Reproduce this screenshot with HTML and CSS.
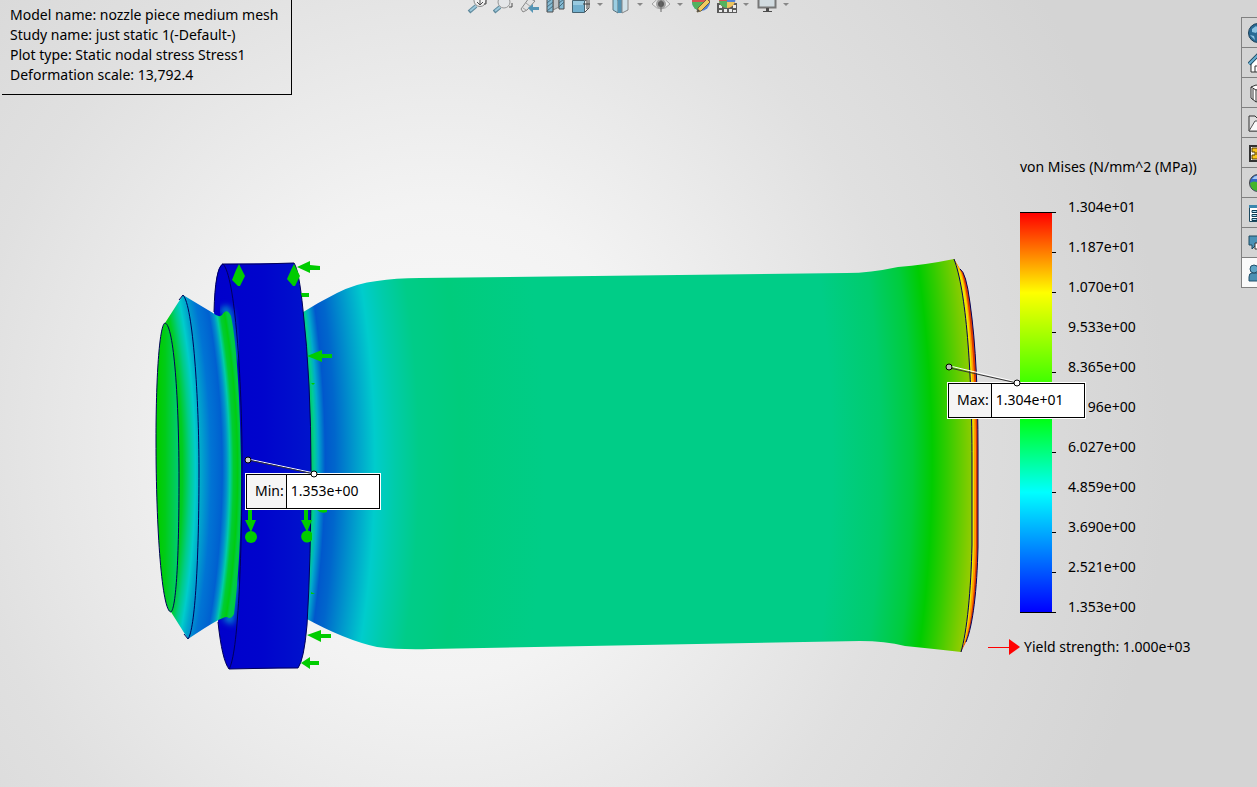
FILE: index.html
```
<!DOCTYPE html>
<html lang="en">
<head>
    <meta charset="utf-8">
    <meta name="viewport" content="width=device-width, initial-scale=1.0">
    <title>Static nodal stress</title>
    <link rel="stylesheet" href="styles.css">
</head>
<body>
    <div class="viewport">
        <header class="top">
            <div class="plot-info">
                <p>Model name: nozzle piece medium mesh</p>
                <p>Study name: just static 1(-Default-)</p>
                <p>Plot type: Static nodal stress Stress1</p>
                <p>Deformation scale: 13,792.4</p>
            </div>

            <div class="toolbar">
                <button class="tool" aria-label="Zoom to fit">
                    <svg viewBox="0 0 20 20"><path d="M2 18l7-6" stroke="#47798f" stroke-width="4"/><path d="M3 17l6-5" stroke="#8fc3da" stroke-width="2"/><circle cx="13" cy="6.500" r="6" fill="#f2f2f2" stroke="#777"/><path d="M13 3v7M10 8l3 3 3-3M19 4v6h-2" fill="none" stroke="#333"/></svg>
                </button>
                <button class="tool" aria-label="Zoom to area">
                    <svg viewBox="0 0 20 20"><path d="M1 18l6-5" stroke="#47798f" stroke-width="4"/><path d="M2 17l5-4" stroke="#8fc3da" stroke-width="2"/><circle cx="11" cy="8" r="6" fill="#e4e7e9" stroke="#888"/><path d="M19 3v3M19 9v4h-3" fill="none" stroke="#333"/></svg>
                </button>
                <button class="tool" aria-label="Previous view">
                    <svg viewBox="0 0 20 20"><path d="M2 15l8-11 6 3-8 9-4 2z" fill="#e2e2e2" stroke="#777"/><path d="M4 14l3 2M7 9l5 4" stroke="#999"/><path d="M9 14l5-4v3h6v3h-6v3z" fill="#3c88ad"/></svg>
                </button>
                <button class="tool" aria-label="Section view">
                    <svg viewBox="0 0 20 20"><path d="M8 4h6v9l-6 3z" fill="#b9bdc0" stroke="#777"/><path d="M2 4h6v14H2zM14 4h5v11h-5z" fill="#74b4d2" stroke="#333"/><path d="M2 9l6-5M2 13l6-5M2 17l6-5M14 9l5-4M14 13l5-5" stroke="#2c566b"/></svg>
                </button>
                <div class="tool-group">
                    <button class="tool" aria-label="View orientation">
                        <svg viewBox="0 0 20 20"><path d="M14 7l4-3v10l-4 4" fill="#f4f4f4" stroke="#333"/><path d="M1.500 6.500h12v12h-12z" fill="#5fa8cb" stroke="#2a4d5e"/><path d="M2 7h11v4H2z" fill="#8cc6e0"/><path d="M12 10h7M16 6v9" stroke="#222"/></svg>
                    </button>
                    <button class="drop" aria-label="Orientation list"></button>
                </div>
                <div class="tool-group">
                    <button class="tool" aria-label="Display style">
                        <svg viewBox="0 0 20 20"><path d="M2 4l5 2v13l-5-3z" fill="#8fcbe3" stroke="#45606c"/><path d="M7 6h4v13H7z" fill="#3c86aa"/><path d="M11 5l6-2v13l-6 3z" fill="#cfe3ec" stroke="#777"/></svg>
                    </button>
                    <button class="drop" aria-label="Display style list"></button>
                </div>
                <div class="tool-group">
                    <button class="tool" aria-label="Hide and show items">
                        <svg viewBox="0 0 20 20"><path d="M1 10q9-11 18 0-9 10-18 0z" fill="#eee" stroke="#999"/><circle cx="10" cy="10" r="5" fill="#999"/><circle cx="10" cy="10" r="3" fill="#444"/><path d="M10 3v15" stroke="#555"/></svg>
                    </button>
                    <button class="drop" aria-label="Hide and show list"></button>
                </div>
                <button class="tool" aria-label="Edit appearance">
                    <svg viewBox="0 0 20 20"><circle cx="10" cy="8" r="9" fill="#3b74d6"/><path d="M10 8V-1a9 9 0 0 1 9 9z" fill="#d83a3a"/><path d="M1 8a9 9 0 0 0 9 9l3-9z" fill="#3cab48"/><path d="M1 8V2h9v6z" fill="#d83a3a"/><path d="M6 18l1-4 9-9 3 3-9 9z" fill="#f5c84a" stroke="#5d4a22"/><path d="M6 18l1-3 2 2z" fill="#333"/></svg>
                </button>
                <div class="tool-group">
                    <button class="tool" aria-label="Apply scene">
                        <svg viewBox="0 0 20 20"><path d="M0 9h20v10H0z" fill="#444"/><path d="M2 11h3v3H2zM2 16h3v2H2zM7 15h3v3H7zM12 15h3v3h-3zM16 11h3v3h-3zM16 16h3v2h-3z" fill="#eee"/><circle cx="10" cy="6" r="8" fill="#d83a3a"/><path d="M2 7a8 8 0 0 0 8 7V7z" fill="#3cab48"/><path d="M10 14a8 8 0 0 0 8-7h-8z" fill="#eec14a"/><path d="M10 2h7q2 3 1 6h-8z" fill="#3b74d6"/></svg>
                    </button>
                    <button class="drop" aria-label="Scene list"></button>
                </div>
                <div class="tool-group">
                    <button class="tool" aria-label="View settings">
                        <svg viewBox="0 0 20 20"><path d="M1.500 1.500h17v12h-17z" fill="#cfdbe1" stroke="#666" stroke-width="2"/><path d="M9 14h3v3H9zM6 17h9v1H6z" fill="#333"/></svg>
                    </button>
                    <button class="drop" aria-label="View settings list"></button>
                </div>
            </div>
        </header>

        <main class="model">
            <svg class="model-plot" viewBox="0 95 988 692" role="img" aria-label="Stress contours on the nozzle">
                <defs>
                    <radialGradient id="barrel" gradientUnits="userSpaceOnUse" cx="-3000" cy="0" fx="-3000" fy="0" fr="3300" r="4000" gradientTransform="translate(0 462) scale(1 .587)">
                        <stop offset="0.015" stop-color="#00cc55"/>
                        <stop offset="0.021" stop-color="#00cc99"/>
                        <stop offset="0.026" stop-color="#00aacc"/>
                        <stop offset="0.036" stop-color="#0058cc"/>
                        <stop offset="0.05" stop-color="#0066cc"/>
                        <stop offset="0.078" stop-color="#0099cc"/>
                        <stop offset="0.107" stop-color="#00cccc"/>
                        <stop offset="0.135" stop-color="#00ccaa"/>
                        <stop offset="0.17" stop-color="#00cc88"/>
                        <stop offset="0.23" stop-color="#00cc7c"/>
                        <stop offset="0.35" stop-color="#00cd87"/>
                        <stop offset="0.76" stop-color="#00cd87"/>
                        <stop offset="0.83" stop-color="#00cc6c"/>
                        <stop offset="0.875" stop-color="#00cc3c"/>
                        <stop offset="0.903" stop-color="#00cc00"/>
                        <stop offset="0.925" stop-color="#33cc00"/>
                        <stop offset="0.965" stop-color="#99cc00"/>
                    </radialGradient>
                    <radialGradient id="neck" gradientUnits="userSpaceOnUse" cx="-800" cy="0" fx="-800" fy="0" fr="956" r="1042" gradientTransform="translate(0 470) scale(1 .95)">
                        <stop offset="0.24" stop-color="#00cc00"/>
                        <stop offset="0.31" stop-color="#00cc22"/>
                        <stop offset="0.39" stop-color="#00cc88"/>
                        <stop offset="0.46" stop-color="#00cccc"/>
                        <stop offset="0.52" stop-color="#00a8cc"/>
                        <stop offset="0.64" stop-color="#0074d4"/>
                        <stop offset="0.77" stop-color="#0060d0"/>
                        <stop offset="0.82" stop-color="#0090cc"/>
                        <stop offset="0.86" stop-color="#00ccaa"/>
                        <stop offset="0.9" stop-color="#00cc33"/>
                        <stop offset="0.95" stop-color="#00cc11"/>
                        <stop offset="0.98" stop-color="#00cc44"/>
                    </radialGradient>
                    <linearGradient id="inlet">
                        <stop offset="0.1" stop-color="#00cc00"/>
                        <stop offset="0.4" stop-color="#00cc18"/>
                        <stop offset="1" stop-color="#00cc77"/>
                    </linearGradient>
                    <linearGradient id="flange">
                        <stop offset="0" stop-color="#0000cc"/>
                        <stop offset="0.5" stop-color="#0004cc"/>
                        <stop offset="1" stop-color="#0014cc"/>
                    </linearGradient>
                    <filter id="glow"><feGaussianBlur stdDeviation="3"/></filter>
                </defs>

                <!-- outlet rim, hot side outwards -->
                <path fill="#dd3c00" d="M954 259L960 269Q966 272 970 303C976 345 978 395 978 450V547C977 590 973 625 966 642L961 652z"/>
                <path fill="#ff9a00" d="M954 259L960 269Q964 275 968 305C973 345 976 395 976 450V547C975 590 971 625 966 640L961 652z"/>
                <path fill="#eee600" d="M954 259L960 271Q963 278 967 305C971 345 974 395 974 450V547C973 590 969 625 965 640L961 652z"/>
                <path class="edge" d="M960 269Q966 272 970 303C976 345 978 395 978 450V547C977 590 973 625 966 642"/>

                <!-- barrel -->
                <path fill="url(#barrel)" d="M300 314Q317 303 337 293T377 281Q395 278 420 278L847 273Q870 273 898 267Q925 265 954 259C966 290 972 370 972 460V545C971 590 967 632 961 652Q935 649 905 646Q885 641 860 641L430 649Q400 650 377 647Q345 640 305 618z"/>
                <path class="edge" d="M954 259C966 290 972 370 972 460V545C971 590 967 632 961 652"/>

                <!-- flange -->
                <path fill="url(#flange)" d="M222 264L294 263Q299 270 303 310Q311 380 311 470Q311 560 307 625Q304 660 298 668L229 669Q222 660 218 622L226 470L214 312Q215 268 222 264z"/>
                <path class="edge" d="M222 264H260L294 263Q299 270 303 310Q311 380 311 470Q311 560 307 625Q304 660 298 668H278L229 669"/>
                <path fill="none" stroke="#009acc" stroke-width="5" filter="url(#glow)" d="M222 314Q226 302 230 315L236 360M224 617L231 621L237 580"/>

                <!-- neck and lip -->
                <path fill="url(#neck)" d="M165 323L183 295L213 313Q219 318 222 315Q227 307 231 316C237 345 240 400 241 460Q242 550 234 614Q231 620 227 617Q222 616 188 639L171 612z"/>
                <path class="edge" d="M214 312Q215 268 223 264C235 275 242 380 242 460C242 560 238 655 229 669Q222 660 218 622"/>
                <path class="edge" d="M179 300L183 295C193 305 199 400 199 470C199 560 195 630 188 639L184 634"/>

                <!-- inlet face -->
                <path class="edge-filled" fill="url(#inlet)" d="M165 323C160 324 156 370 156 440C156 530 162 612 171 612C176 608 179 560 179 480C179 400 174 325 165 323z"/>

                <!-- fixtures -->
                <g fill="#00cc00">
                    <path d="M239 264L245 276L240 286H238L232 280L236 270z"/>
                    <path d="M294 264L300 276L295 286H293L287 279L291 270z"/>
                    <path d="M297 267L310 261V265L320 266V270H310V273z"/>
                    <path d="M301 293h8v4h-7z"/>
                    <path d="M307 356L322 350V354H332V358H322V362z"/>
                    <path d="M307 635L321 630V634H331V638H321V642z"/>
                    <path d="M301 663L310 657V661H319V665H310V669z"/>
                    <path d="M314 508h13v4q-6 2-10-2z"/>
                    <path d="M311 383h4l-2 2zM311 592l4 2h-4z"/>
                    <path d="M248 508h4v12h4l-5 12l-6-12h3z"/>
                    <path d="M304 508h4v12h4l-5 12l-6-12h3z"/>
                    <circle cx="251" cy="537" r="6"/>
                    <path d="M312 533a6 6 0 1 0 0 7z"/>
                </g>
            </svg>

            <div class="callout callout-min">
                <span class="callout-name">Min:</span>
                <span class="callout-value">1.353e+00</span>
            </div>
            <div class="callout callout-max">
                <span class="callout-name">Max:</span>
                <span class="callout-value">1.304e+01</span>
            </div>

            <svg class="leaders" viewBox="0 95 988 692" aria-hidden="true">
                <path stroke="#fff" d="M248 459L314 473M950 366L1017 382"/>
                <path stroke="#333" d="M248 460L314 474M950 368L1017 383"/>
                <g stroke="#000">
                    <circle cx="248" cy="460" r="3" fill="#ccc"/>
                    <circle cx="314" cy="474" r="3" fill="#fff"/>
                    <circle cx="949" cy="367" r="3" fill="#bbb"/>
                    <circle cx="1017" cy="383" r="3" fill="#fff"/>
                </g>
            </svg>
        </main>

        <section class="legend">
            <h1>von Mises (N/mm^2 (MPa))</h1>
            <div class="scale">
                <div class="color-bar"></div>
                <div class="ticks"></div>
                <ul>
                    <li>1.304e+01</li>
                    <li>1.187e+01</li>
                    <li>1.070e+01</li>
                    <li>9.533e+00</li>
                    <li>8.365e+00</li>
                    <li>7.196e+00</li>
                    <li>6.027e+00</li>
                    <li>4.859e+00</li>
                    <li>3.690e+00</li>
                    <li>2.521e+00</li>
                    <li>1.353e+00</li>
                </ul>
            </div>
            <p class="yield">
                <svg viewBox="0 0 32 16"><path d="M0 8.500h22" stroke="#f00"/><path d="M21 0l11 8-11 8z" fill="#f00"/></svg>
                Yield strength: 1.000e+03
            </p>
        </section>

        <nav class="task-pane" aria-label="Task pane">
            <button aria-label="Resources">
                <svg viewBox="0 0 20 20"><circle cx="10" cy="10" r="9.500" fill="#2a6a94" stroke="#1d3f57"/><path d="M4 6l4-3 3 3-3 4-4-1zM2 12l4 1 1 4z" fill="#8cc3e2"/></svg>
            </button>
            <button aria-label="Home">
                <svg viewBox="0 0 20 20"><path d="M3 10v9h14v-9l-7-7z" fill="#fff" stroke="#333"/><path d="M7 19v-6h5v6" fill="none" stroke="#333"/><path d="M1 11l9-9 9 9" fill="none" stroke="#1f4960" stroke-width="4"/><path d="M1 11l9-9 9 9" fill="none" stroke="#69aed0" stroke-width="2"/></svg>
            </button>
            <button aria-label="Design library">
                <svg viewBox="0 0 20 20"><path d="M3 4l5-2 8 2v12l-8 3-5-4z" fill="#fff" stroke="#333"/><path d="M3 4l5 3 8-3M8 7v12M5 6v11" fill="none" stroke="#333"/></svg>
            </button>
            <button aria-label="File explorer">
                <svg viewBox="0 0 20 20"><path d="M1 18V3h6l2 2h8v13z" fill="#ddd" stroke="#333"/><path d="M1 18L7 8h13l-5 10z" fill="#fafafa" stroke="#555"/></svg>
            </button>
            <button aria-label="View palette">
                <svg viewBox="0 0 20 20"><path d="M2 3h17v15H2z" fill="#fff" stroke="#333" stroke-width="2"/><path d="M4 5h12v4H9v3h8v4H4v-4h3V9H4z" fill="#f8c51c" stroke="#553c00"/></svg>
            </button>
            <button aria-label="Appearances">
                <svg viewBox="0 0 20 20"><circle cx="10" cy="10" r="8.500" fill="#3268c8" stroke="#444"/><path d="M2 10q4-3 8 0v8a8 8 0 0 1-8-8z" fill="#42b52c"/><path d="M4 6q3-4 6-3v3z" fill="#a3caf4"/></svg>
            </button>
            <button aria-label="Custom properties">
                <svg viewBox="0 0 20 20"><path d="M1.500 2.500h17v16h-17z" fill="#fff" stroke="#1e4a60"/><path d="M1 2h18v3H1z" fill="#3d87ad"/><path d="M4 7.500h5v2H4zM4 11.500h5v2H4zM4 15.500h5v2H4z" fill="#aee0f5" stroke="#123d52"/></svg>
            </button>
            <button aria-label="Forum">
                <svg viewBox="0 0 20 20"><path d="M1 3h14v9H8l-4 4v-4H1z" fill="#4c92b6" stroke="#1e4a60"/><path d="M7 10h12v6h-2v3l-3-3H7z" fill="#fff" stroke="#333"/></svg>
            </button>
            <button class="active" aria-label="Collaboration">
                <svg viewBox="0 0 20 20"><path d="M1 18v-4q0-4 3-4h5q3 0 3 4v4z" fill="#4b90b3" stroke="#24506a"/><circle cx="6" cy="6" r="4" fill="#5fa5c6" stroke="#24506a"/><circle cx="14" cy="9" r="3" fill="#fff" stroke="#333"/></svg>
            </button>
        </nav>
    </div>
</body>
</html>
```

FILE: styles.css
```
* {
    box-sizing: border-box;
}
body {
    margin: 0;
    font-family: "Noto Sans", "Open Sans", sans-serif;
    font-size: 14px;
    line-height: 20px;
    color: #000;
}
p, h1, ul {
    margin: 0;
    padding: 0;
    font-size: 14px;
    font-weight: normal;
    list-style: none;
}
button {
    padding: 0;
    border: none;
    background: none;
    cursor: pointer;
}
svg {
    display: block;
}
.viewport {
    display: grid;
    grid-template-columns: 1fr 253px 16px;
    grid-template-rows: auto 1fr;
    min-height: 100vh;
    overflow: hidden;
    background: radial-gradient(ellipse 58% 100% at 35% 56%, #fafafa 0%, #f3f3f3 30%, #e0e0e0 65%, #d4d4d4 100%);
}

/* header: plot details on the left, view tools in the middle */
.top {
    grid-area: 1 / 1 / 2 / 4;
    display: grid;
    grid-template-columns: 1fr auto 1fr;
    align-items: start;
}
.plot-info {
    justify-self: start;
    margin-left: 2px;
    padding: 5px 13px 9px 8px;
    border-right: 1px solid #000;
    border-bottom: 1px solid #000;
}
.toolbar {
    display: flex;
    gap: 6px;
    margin-top: -6px;
}
.tool-group {
    display: flex;
    align-items: center;
    gap: 4px;
}
.tool {
    width: 20px;
    height: 20px;
    opacity: 0.85;
}
.drop {
    width: 10px;
    height: 20px;
}
.drop::before {
    content: "";
    display: block;
    margin: 0 auto;
    width: 0;
    border: 3px solid transparent;
    border-top-color: #888;
    border-bottom: none;
}

/* model and probes */
.model {
    grid-area: 2 / 1;
    position: relative;
    z-index: 1;
}
.model-plot {
    width: 100%;
}
.edge, .edge-filled {
    stroke: #00005a;
    stroke-width: 1;
}
.edge {
    fill: none;
}
.leaders {
    position: absolute;
    top: 0;
    left: 0;
    width: 100%;
    overflow: visible;
}
.callout {
    position: absolute;
    display: flex;
    height: 35px;
    line-height: 32px;
    border: 1px solid #000;
    outline: 1px solid #fff;
    background: #fff;
}
.callout-min {
    left: 246px;
    top: 379px;
}
.callout-max {
    left: 948px;
    top: 288px;
}
.callout-name {
    padding: 0 2px 0 8px;
    border-right: 1px solid #000;
    background: #f5f5f5;
}
.callout-value {
    padding: 0 21px 0 4px;
}

/* legend */
.legend {
    grid-area: 2 / 2;
    padding-top: 62px;
}
.legend h1 {
    margin-left: 32px;
}
.scale {
    display: flex;
    margin: 10px 0 10px 32px;
}
.scale li {
    line-height: 40px;
}
.color-bar {
    width: 32px;
    height: 401px;
    margin-top: 25px;
    border-top: 1px solid #000;
    border-bottom: 1px solid #000;
    background: linear-gradient(#f00, #ff0 20%, #0f0 50%, #0ff 70%, #00f);
}
.ticks {
    width: 4px;
    height: 401px;
    margin: 25px 12px 0 0;
    background: repeating-linear-gradient(#000 0, #000 1px, transparent 1px, transparent 40px);
}
.yield {
    display: flex;
    align-items: center;
    gap: 4px;
}
.yield svg {
    width: 32px;
    height: 16px;
}

/* task pane, runs past the window edge */
.task-pane {
    grid-area: 1 / 3 / 3 / 4;
    align-self: start;
    z-index: 2;
    margin-top: 17px;
    border-left: 1px solid #808080;
    border-top: 1px solid #808080;
    overflow: hidden;
}
.task-pane button {
    display: block;
    width: 32px;
    height: 30px;
    padding-left: 6px;
    border-bottom: 1px solid #808080;
}
.task-pane svg {
    width: 20px;
    height: 20px;
}
.task-pane .active {
    background: #fafafa;
}
```
